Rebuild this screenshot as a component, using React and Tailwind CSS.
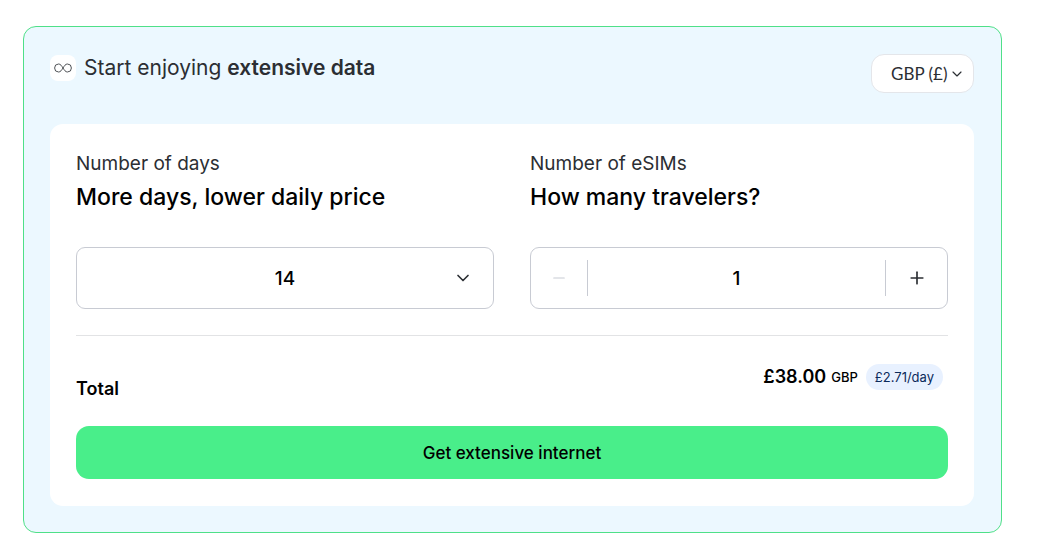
import React, { useState } from 'react';
import { ChevronDown, Minus, Plus } from 'lucide-react';

const PRICES = { 7: 23, 14: 38, 30: 62 };
const CURRENCIES = ['GBP (£)', 'USD ($)', 'EUR (€)'];

const styles = {
  label: "block text-[19px] leading-7 text-[#2b2e33]",
  title: "mt-1 text-[23px] leading-[30px] font-medium text-black",
  field: "h-[62px] w-full rounded-[9px] border border-[#c8cbd3] bg-white",
};

const InfinityIcon = () => (
  <span className="flex h-[26px] w-[26px] items-center justify-center rounded-lg bg-white">
    <svg width="18" height="10" viewBox="0 0 18 10" fill="none" stroke="#3c3f44" strokeWidth="0.9" aria-hidden="true">
      <path d="M9 5C7.6 2.8 6.5 1 4.6 1a4 4 0 0 0 0 8C6.5 9 7.6 7.2 9 5s2.5-4 4.4-4a4 4 0 0 1 0 8C11.5 9 10.4 7.2 9 5Z" />
    </svg>
  </span>
);

const App = () => {
  const [days, setDays] = useState(14);
  const [count, setCount] = useState(1);
  const [currency, setCurrency] = useState(CURRENCIES[0]);

  const total = PRICES[days] * count;
  const perDay = PRICES[days] / days;

  return (
    <main className="pt-[26px] pr-[35px] pb-6 pl-[23px] font-['Inter','Liberation_Sans',sans-serif]">
      <section className="rounded-[13px] border border-[#4fe088] bg-[#ecf8ff] pt-[27px] pr-[27px] pb-[26px] pl-[26px]">

        {/* Header */}
        <div className="flex items-start justify-between">
          <div className="flex items-center gap-2">
            <InfinityIcon />
            <h2 className="text-[21px] leading-7 text-[#2b2e33]">
              Start enjoying <strong className="font-semibold">extensive data</strong>
            </h2>
          </div>
          <div className="relative">
            <select
              aria-label="Currency"
              value={currency}
              onChange={(e) => setCurrency(e.target.value)}
              className="h-[39px] w-[103px] cursor-pointer appearance-none rounded-[13px] border border-[#e4e6ea] bg-white pl-[19px] font-['Lato',sans-serif] text-[17px] text-[#2b2e33] outline-none"
            >
              {CURRENCIES.map(c => (
                <option key={c} value={c}>{c}</option>
              ))}
            </select>
            <ChevronDown size={16} strokeWidth={1.75} className="pointer-events-none absolute top-3 right-[9px] text-[#2b2e33]" />
          </div>
        </div>

        <div className="mt-[31px] rounded-[13px] bg-white px-[26px] pt-[26px] pb-[27px]">

          {/* Fields */}
          <div className="grid grid-cols-2 gap-9 border-b border-[#e2e3e5] pb-[26px]">
            <div>
              <label htmlFor="days" className={styles.label}>Number of days</label>
              <p className={styles.title}>More days, lower daily price</p>
              <div className="relative mt-[35px]">
                <select
                  id="days"
                  value={days}
                  onChange={(e) => setDays(Number(e.target.value))}
                  className={`${styles.field} cursor-pointer appearance-none pt-0.5 text-center text-[19px] font-medium text-black outline-none [text-align-last:center]`}
                >
                  {Object.keys(PRICES).map(d => (
                    <option key={d} value={d}>{d}</option>
                  ))}
                </select>
                <ChevronDown size={20} className="pointer-events-none absolute top-[21px] right-[21px] text-[#2b2e33]" />
              </div>
            </div>

            <div>
              <label htmlFor="esims" className={styles.label}>Number of eSIMs</label>
              <p className={styles.title}>How many travelers?</p>
              <div className={`${styles.field} mt-[35px] flex items-center`}>
                <button
                  type="button"
                  aria-label="Remove eSIM"
                  disabled={count <= 1}
                  onClick={() => setCount(count - 1)}
                  className="flex h-9 w-[57px] shrink-0 items-center justify-center border-r border-[#c8cbd3] text-[#2b2e33] disabled:text-[#c8cbd3]"
                >
                  <Minus size={18} strokeWidth={1.5} />
                </button>
                <input
                  id="esims"
                  type="text"
                  inputMode="numeric"
                  readOnly
                  value={count}
                  className="min-w-0 flex-1 pt-0.5 text-center text-[19px] font-medium text-black outline-none"
                />
                <button
                  type="button"
                  aria-label="Add eSIM"
                  onClick={() => setCount(count + 1)}
                  className="flex h-9 w-[62px] shrink-0 items-center justify-center border-l border-[#c8cbd3] text-[#2b2e33]"
                >
                  <Plus size={20} strokeWidth={2} />
                </button>
              </div>
            </div>
          </div>

          {/* Total */}
          <div className="flex items-end justify-between pt-7">
            <span className="pt-3 text-[18px] leading-[26px] font-semibold text-black">Total</span>
            <div className="flex items-center self-start pr-[5px]">
              <span className="text-[18px] leading-[26px] font-semibold text-black">£{total.toFixed(2)}</span>
              <span className="ml-[5px] text-[13px] leading-[26px] font-medium text-black">GBP</span>
              <span className="ml-2 rounded-full bg-[#e8f1ff] px-[9px] text-[13px] leading-[26px] text-[#0b2a5b]">
                £{perDay.toFixed(2)}/day
              </span>
            </div>
          </div>

          <button
            type="button"
            className="mt-6 h-[53px] w-full cursor-pointer rounded-[13px] bg-[#49ee8a] text-[17px] leading-6 font-medium text-black"
          >
            Get extensive internet
          </button>
        </div>
      </section>
    </main>
  );
};

export default App;
